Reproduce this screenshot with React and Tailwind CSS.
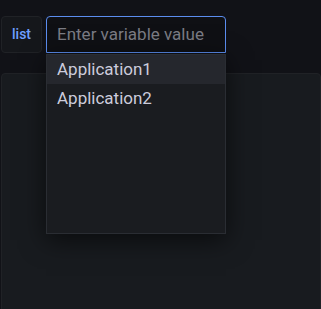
import React from 'react';

export default function App() {
  const options = ['Application1', 'Application2'];

  return (
    <div className="relative w-[321px] h-[309px] overflow-hidden bg-[#111217] font-['Roboto','Liberation_Sans',sans-serif]">
      <div className="flex items-stretch gap-1 pt-4 pl-px h-[53px]">
        <div className="flex items-center px-[10px] w-[41px] rounded-sm border border-[#202226] bg-[#15171b] text-[14px] font-medium text-[#6e9fff]">
          list
        </div>
        <div className="relative w-[180px]">
          <div className="h-[37px] flex items-center px-[10px] rounded-t-sm border border-[#5b8def] bg-[#0f1014] text-[17px] text-[#7b7c84]">
            Enter variable value
          </div>
          <div className="absolute left-0 top-[38px] z-10 w-[180px] h-[180px] border border-[#2a2d33] bg-[#1a1c20] shadow-[0_6px_24px_rgba(0,0,0,0.6)]">
            {options.map((opt, i) => (
              <div
                key={opt}
                className={`h-[29px] flex items-center px-[10px] text-[17px] text-[#ccccdc] ${i === 0 ? 'bg-[#25272d]' : ''}`}
              >
                {opt}
              </div>
            ))}
          </div>
        </div>
      </div>

      <div className="mt-5 ml-px h-[300px] rounded-sm border border-[#202226] bg-[#181b1f]" />
    </div>
  );
}
